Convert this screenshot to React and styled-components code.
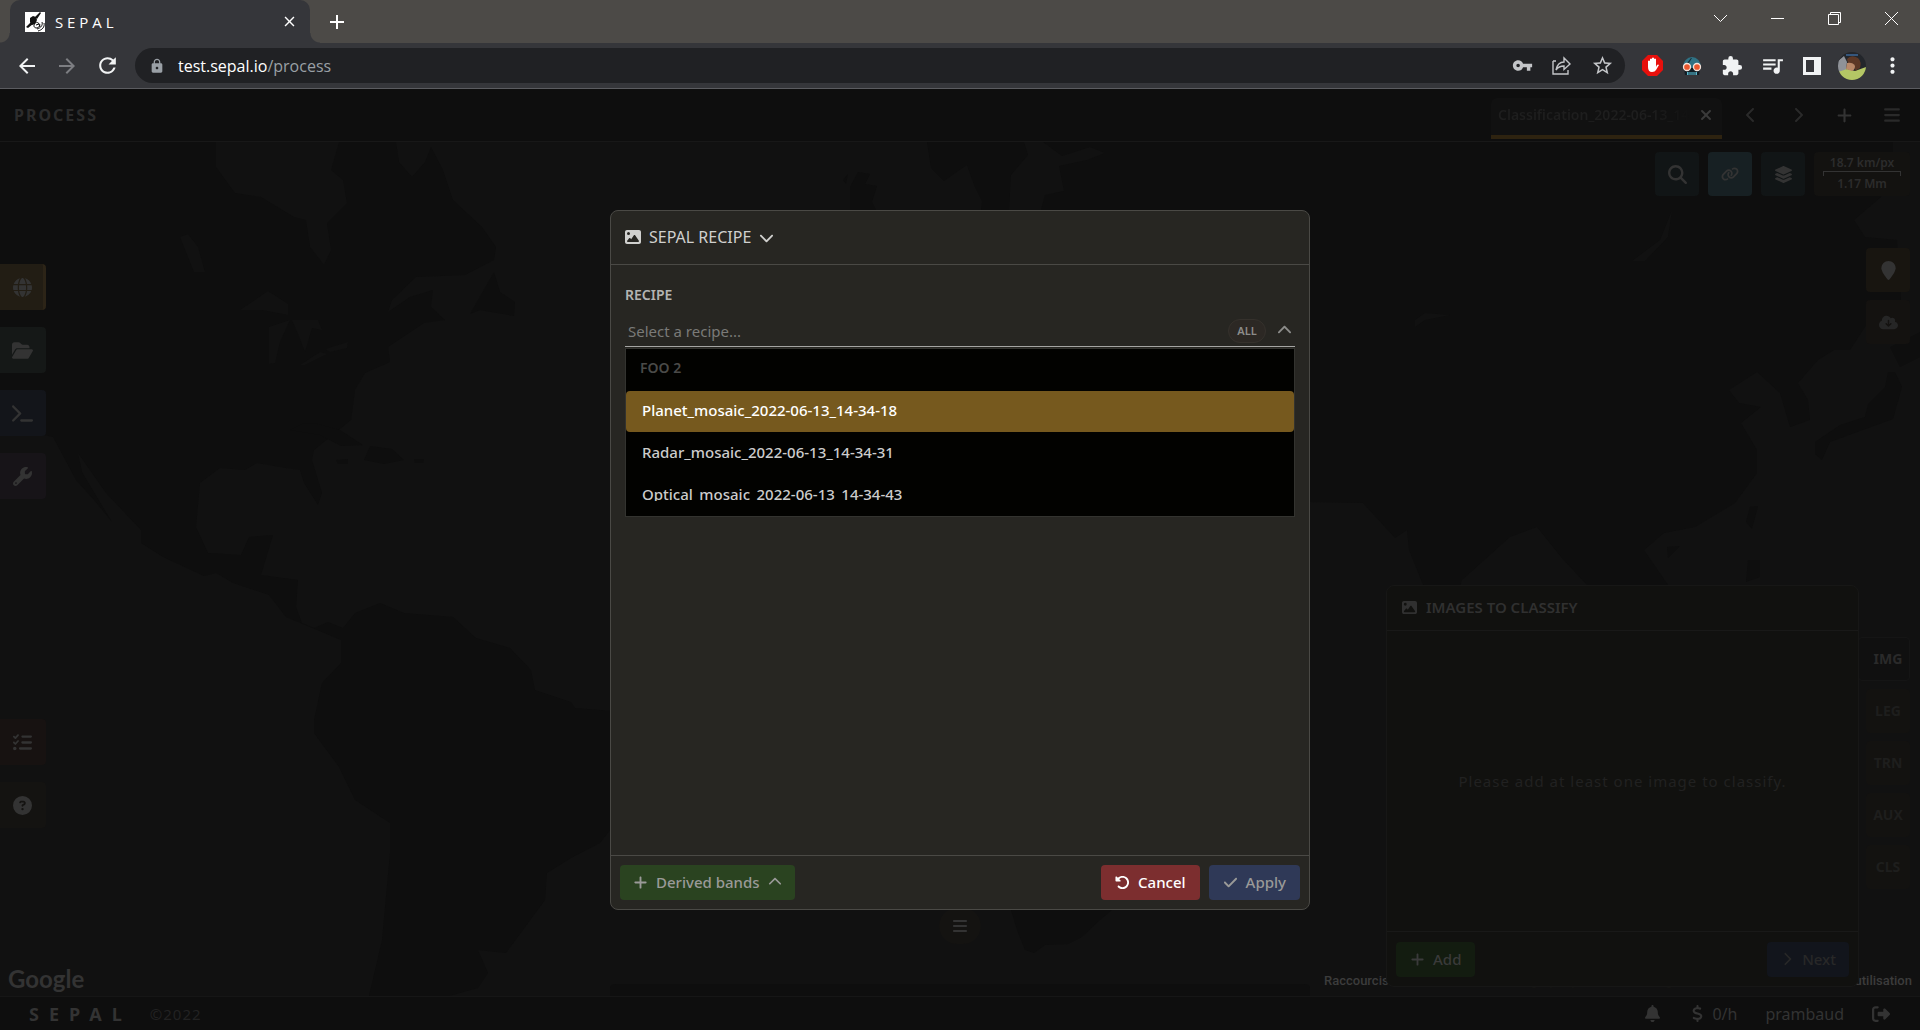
import React from "react";
import styled, { createGlobalStyle } from "styled-components";
import {
  MdArrowBack, MdArrowForward, MdRefresh, MdLock, MdVpnKey, MdStarBorder,
  MdExtension, MdQueueMusic, MdMoreVert, MdAdd, MdClose,
} from "react-icons/md";
import {
  FaGlobe, FaFolderOpen, FaTerminal, FaWrench, FaListCheck, FaCircleQuestion,
  FaImage, FaBars, FaPlus, FaXmark, FaMagnifyingGlass, FaLink, FaLayerGroup,
  FaLocationPin, FaCloudArrowDown, FaBell, FaDollarSign, FaRightFromBracket,
  FaRotateLeft, FaCheck, FaChevronDown, FaChevronUp, FaChevronLeft, FaChevronRight,
} from "react-icons/fa6";

const GlobalStyle = createGlobalStyle`
  * { box-sizing: border-box; }
  body { margin: 0; background: #111; }
  button { font: inherit; color: inherit; border: 0; padding: 0; background: none; cursor: pointer; }
  svg { display: block; flex: none; }
`;

const Window = styled.div`
  min-height: 100vh;
  display: flex;
  flex-direction: column;
  overflow: hidden;
  font-family: "Noto Sans", sans-serif;
  font-size: 15px;
  line-height: 20px;
`;

/* Browser frame */
const TabStrip = styled.div`
  height: 43px;
  display: flex;
  align-items: stretch;
  padding: 0 0 0 10px;
  background: #4c4a47;
`;
const BrowserTab = styled.div`
  position: relative;
  width: 300px;
  display: flex;
  align-items: center;
  gap: 10px;
  padding: 0 12px 0 15px;
  background: #35363a;
  border-radius: 10px 10px 0 0;
  color: #fff;
  &::before, &::after {
    content: "";
    position: absolute;
    bottom: 0;
    width: 10px;
    height: 10px;
  }
  &::before { left: -10px; background: radial-gradient(circle at 0 0, #4c4a47 9px, #35363a 10px); }
  &::after { right: -10px; background: radial-gradient(circle at 100% 0, #4c4a47 9px, #35363a 10px); }
`;
const TabTitle = styled.span`
  flex: 1;
  font-family: "Open Sans", sans-serif;
`;
const NewTab = styled.button`
  width: 28px;
  margin-left: 13px;
  display: grid;
  place-items: center;
  color: #fff;
`;
const WindowControls = styled.div`
  margin-left: auto;
  display: flex;
  height: 37px;
`;
const WindowButton = styled.button`
  width: 57px;
  display: grid;
  place-items: center;
`;
const Toolbar = styled.div`
  height: 46px;
  display: flex;
  align-items: center;
  background: #35363a;
  border-bottom: 1px solid #5b5c60;
  padding: 0 8px 0 7px;
`;
const ToolButton = styled.button`
  width: 40px;
  height: 34px;
  display: grid;
  place-items: center;
  color: ${(p) => p.$color || "#f1f3f4"};
`;
const AddressBar = styled.div`
  flex: 1;
  height: 35px;
  margin: 0 7px 0 8px;
  padding: 0 3px 0 14px;
  border-radius: 18px;
  background: #202124;
  display: flex;
  align-items: center;
  color: #9aa0a6;
`;
const Address = styled.div`
  flex: 1;
  margin-left: 13px;
  font-family: "Open Sans", sans-serif;
  font-size: 16px;
  b { font-weight: 400; color: #fff; }
`;

/* Application frame */
const Workspace = styled.main`
  position: relative;
  flex: 1;
  display: flex;
  flex-direction: column;
  background: #0e0e0e;
  color: #333;
`;
const AppHeader = styled.header`
  height: 53px;
  display: flex;
  align-items: center;
  border-bottom: 1px solid #181818;
  padding: 0 5px 0 14px;
`;
const Title = styled.h1`
  flex: 1;
  margin: 0;
  font-size: 16px;
  letter-spacing: 2px;
  color: #2c2c2c;
`;
const RecipeTab = styled.div`
  align-self: flex-end;
  width: 231px;
  height: 41px;
  margin: 0 5px 2px 0;
  padding: 0 8px 3px 7px;
  display: flex;
  align-items: center;
  gap: 8px;
  background: #111;
  border-bottom: 4px solid #2e2310;
  border-radius: 6px 6px 0 0;
  color: #1e1e1e;
`;
const RecipeTabName = styled.span`
  flex: 1;
  overflow: hidden;
  white-space: nowrap;
  font-size: 14px;
  font-weight: 600;
  mask-image: linear-gradient(90deg, #000 80%, transparent);
`;
const CloseRecipe = styled.button`
  color: #3a3a3a;
`;
const HeaderButton = styled.button`
  width: 47px;
  height: 40px;
  display: grid;
  place-items: center;
  color: ${(p) => p.$color || "#2a2a2a"};
`;
const MapArea = styled.section`
  position: relative;
  flex: 1;
  overflow: hidden;
  background: #111;
`;
const WorldMap = styled.svg`
  position: absolute;
  inset: 0;
  width: 100%;
  height: 100%;
`;
const SideMenu = styled.nav`
  position: absolute;
  left: 0;
  ${(p) => (p.$bottom ? "bottom: 168px;" : "top: 122px;")}
  display: flex;
  flex-direction: column;
  gap: 17px;
`;
const SideButton = styled.button`
  width: 46px;
  height: 46px;
  padding-right: 2px;
  display: grid;
  place-items: center;
  border-radius: 0 4px 4px 0;
  background: ${(p) => p.$bg};
  color: #333;
  ${(p) => p.$active && "border-right: 3px solid #2c2417; padding: 0 0 0 1px;"}
`;
const MapTools = styled.div`
  position: absolute;
  top: 10px;
  right: 10px;
  display: flex;
  gap: 9px;
`;
const MapActions = styled.div`
  position: absolute;
  top: 106px;
  right: 10px;
  display: flex;
  flex-direction: column;
  gap: 8px;
`;
const SquareButton = styled.button`
  width: 44px;
  height: 44px;
  display: grid;
  place-items: center;
  border-radius: 4px;
  background: ${(p) => p.$bg};
  color: ${(p) => p.$color || "#333"};
`;
const Scale = styled.div`
  width: 96px;
  height: 44px;
  padding: 0 9px 2px;
  display: flex;
  flex-direction: column;
  justify-content: center;
  border-radius: 4px;
  background: #131210;
  text-align: center;
  font-size: 12px;
  line-height: 16px;
  font-weight: 600;
  color: #2c2c2c;
`;
const ScaleBar = styled.i`
  height: 5px;
  border: 1px solid #333;
  border-bottom: 0;
`;
const MapLogo = styled.a`
  position: absolute;
  left: 8px;
  bottom: 3px;
  font: 700 24px/28px Lato, sans-serif;
  color: #333;
  text-decoration: none;
`;
const Attribution = styled.div`
  position: absolute;
  right: 8px;
  bottom: 6px;
  width: 588px;
  display: flex;
  justify-content: space-between;
  font: 500 13px/18px Roboto, sans-serif;
  color: #3c3c3c;
  span { color: #151513; }
`;
const Handle = styled.button`
  position: absolute;
  left: 50%;
  bottom: 52px;
  width: 42px;
  height: 36px;
  margin-left: -21px;
  display: grid;
  place-items: center;
  border-radius: 18px;
  background: #141311;
  color: #333;
`;
const Panel = styled.section`
  position: absolute;
  right: 61px;
  bottom: 9px;
  width: 473px;
  height: 402px;
  display: flex;
  flex-direction: column;
  border: 1px solid #171716;
  border-radius: 8px;
  background: #11110f;
`;
const PanelHeader = styled.h2`
  height: 45px;
  margin: 0;
  padding: 0 15px 2px;
  display: flex;
  align-items: center;
  gap: 9px;
  border-bottom: 1px solid #191918;
  font-size: 15px;
  font-weight: 600;
  color: #303030;
`;
const PanelBody = styled.p`
  flex: 1;
  margin: 0;
  display: grid;
  place-items: center;
  letter-spacing: 1px;
  color: #212121;
`;
const PanelFooter = styled.div`
  height: 55px;
  padding: 0 9px;
  display: flex;
  align-items: center;
  justify-content: space-between;
  border-top: 1px solid #191918;
`;
const PanelTabs = styled.nav`
  position: absolute;
  right: 10px;
  bottom: 107px;
  display: flex;
  flex-direction: column;
  align-items: flex-end;
  gap: 8px;
`;
const PanelTab = styled.button`
  width: ${(p) => (p.$active ? 52 : 44)}px;
  height: 44px;
  padding-left: ${(p) => (p.$active ? 8 : 0)}px;
  border-radius: 4px;
  background: ${(p) => (p.$active ? "#101010" : "#131210")};
  border: 1px solid ${(p) => (p.$active ? "#151515" : "#131210")};
  font-size: 14px;
  font-weight: 700;
  color: ${(p) => (p.$active ? "#2a2a2a" : "#1e1e1d")};
`;
const StatusBar = styled.footer`
  height: 34px;
  padding: 0 30px 0 29px;
  display: flex;
  align-items: center;
  gap: 28px;
  border-top: 1px solid #161616;
  font-size: 16px;
  color: #333;
`;
const Brand = styled.strong`
  font-size: 18px;
  letter-spacing: 10px;
`;
const Copyright = styled.span`
  flex: 1;
  margin-left: -10px;
  font-size: 15px;
  letter-spacing: 1px;
  color: #222;
`;
const Budget = styled.span`
  display: flex;
  align-items: center;
  gap: 6px;
`;

/* Dialog */
const Overlay = styled.div`
  position: absolute;
  inset: 0;
  display: flex;
  align-items: center;
  justify-content: center;
`;
const Dialog = styled.section`
  width: 700px;
  height: 700px;
  display: flex;
  flex-direction: column;
  border: 1px solid #4a4945;
  border-radius: 8px;
  background: #272622;
  color: #ccc;
`;
const DialogHeader = styled.header`
  height: 54px;
  padding: 0 14px;
  display: flex;
  align-items: center;
  border-bottom: 1px solid #4a4945;
`;
const TypeButton = styled.button`
  display: flex;
  align-items: center;
  gap: 8px;
  font-size: 16px;
  color: #d0d0ce;
`;
const DialogBody = styled.div`
  flex: 1;
  padding: 20px 14px;
`;
const FieldLabel = styled.label`
  display: block;
  font-size: 14px;
  font-weight: 600;
  color: #b4b4b2;
`;
const Combo = styled.div`
  height: 41px;
  margin-top: 1px;
  padding: 10px 3px 0 0;
  display: flex;
  align-items: center;
  gap: 11px;
  border-bottom: 1px solid #a5a5a3;
  color: #8c8c8a;
`;
const ComboInput = styled.input`
  flex: 1;
  padding: 4px 3px;
  border: 0;
  outline: 0;
  background: none;
  font: 15px/20px "Noto Sans", sans-serif;
  color: #ccc;
  &::placeholder { color: #7a7a78; opacity: 1; }
`;
const Pill = styled.button`
  width: 38px;
  height: 24px;
  border-radius: 12px;
  border: 1px solid #35312c;
  background: #2c2824;
  font-size: 11px;
  font-weight: 600;
  color: #8c8c8a;
`;
const Options = styled.ul`
  margin: 1px 0 0;
  padding: 0;
  list-style: none;
  border: 1px solid #33332f;
  background: #020200;
`;
const OptionGroup = styled.li`
  height: 42px;
  padding: 0 14px 3px;
  display: flex;
  align-items: center;
  font-size: 14px;
  font-weight: 600;
  color: #4a4a48;
`;
const Option = styled.li`
  height: 41px;
  padding: 0 16px 2px;
  display: flex;
  align-items: center;
  border-radius: 4px;
  background: ${(p) => (p.$selected ? "#76591e" : "transparent")};
  color: ${(p) => (p.$selected ? "#fff" : "#ccc")};
  font-weight: 500;
  & + & { margin-top: 1px; }
`;
const OptionLabel = styled.span`
  line-height: ${(p) => (p.$clipped ? 14 : 20)}px;
  overflow: ${(p) => (p.$clipped ? "hidden" : "visible")};
`;
const DialogFooter = styled.footer`
  height: 54px;
  padding: 0 9px;
  display: flex;
  align-items: center;
  gap: 9px;
  border-top: 1px solid #4a4945;
`;
const Spacer = styled.span`
  flex: 1;
`;
const ActionButton = styled.button`
  height: 35px;
  padding: 0 ${(p) => (p.$menu ? 13 : 14)}px;
  display: flex;
  align-items: center;
  gap: 8px;
  border-radius: 4px;
  background: ${(p) => p.$bg};
  color: ${(p) => p.$color};
  font-weight: 500;
`;

const Satellite = () => (
  <svg width="20" height="20" viewBox="0 0 20 20">
    <rect width="20" height="20" fill="#fff" />
    <path d="M1 15l5-5 2 2-5 4zM10 5l5-5 1 1-4 6z" fill="#111" />
    <path d="M5 6l3-2 3 1 1 3-2 4-3 1-2-3z" fill="#111" />
    <path d="M10 11c-2 3-1 5 2 5 3-1 4-4 1-5-1-1-2-1-3 0zM17 10c1 3-1 6-5 7M19 11c1 4-2 7-6 8" fill="none" stroke="#111" strokeWidth="1" />
    <path d="M11 13l3-1 1 3" fill="none" stroke="#111" strokeWidth="1" />
  </svg>
);
const Share = () => (
  <svg width="20" height="20" viewBox="0 0 20 20" fill="none" stroke="currentColor" strokeWidth="1.4">
    <path d="M1 5v13h15v-4M1 5h3" />
    <path d="M12 6V2l6 6-6 5.500V10c-3 0-6 1-8 4 1-5 4-8 8-8z" />
  </svg>
);
const Blocker = () => (
  <svg width="21" height="21" viewBox="0 0 21 21">
    <path d="M6 0h9l6 6v9l-6 6H6l-6-6V6z" fill="#e8100c" />
    <path d="M6 11V6q1-1 2 0v3-5q1-1 2 0v4-5q1-1 2 0v5-4q1-1 2 0v8l1-2q1-1 2 0l-3 5q-1 2-4 2-4 0-4-5z" fill="#fff" />
  </svg>
);
const Robot = () => (
  <svg width="20" height="20" viewBox="0 0 20 20">
    <path d="M1 11a9 10 0 0 1 18 0v2H1z" fill="#2f7284" />
    <path d="M9 2l-4 5h2l3-5z" fill="#16323c" />
    <path d="M2 12h16l-1 7H3z" fill="#111d24" />
    <path d="M5 16h10v3H5z" fill="#59b4c9" />
    <path d="M7 16v3M9 16v3M11 16v3M13 16v3" stroke="#16323c" />
    <circle cx="5" cy="11" r="3.500" fill="#e9582f" stroke="#f5e3da" strokeWidth="1.300" />
    <circle cx="15" cy="11" r="3.500" fill="#e9582f" stroke="#f5e3da" strokeWidth="1.300" />
  </svg>
);
const SidePanel = () => (
  <svg width="18" height="18" viewBox="0 0 18 18">
    <path fillRule="evenodd" d="M0 0h18v18H0zM3 3v12h8V3z" fill="#f1f3f4" />
  </svg>
);
const Avatar = () => (
  <svg width="28" height="28" viewBox="0 0 28 28">
    <clipPath id="face"><circle cx="14" cy="14" r="14" /></clipPath>
    <g clipPath="url(#face)">
      <path d="M0 0h28v28H0z" fill="#23262b" />
      <path d="M0 9l6-5 3 6-1 8-8 3z" fill="#8f9298" />
      <path d="M0 20l9-3 8 2 11-4v13H0z" fill="#b4c765" />
      <path d="M9 7q4-5 11-1 4 4 2 10l-5 3q1-5-7-8z" fill="#5d3826" />
      <path d="M9 11q6-1 8 3 0 4-3 5l-6-2z" fill="#b98868" />
      <path d="M8 3h12" stroke="#35567c" strokeWidth="2" />
    </g>
  </svg>
);
const Line = ({ d }) => (
  <svg width="15" height="15" viewBox="0 0 15 15" fill="none" stroke="#fff" strokeWidth="1"><path d={d} /></svg>
);

const land = [
  "M0 0H216V25L235 51 261 55 294 75 306 78 310 105 324 123 331 108 327 81 347 61 343 38 331 28 339 0H396L399 20 412 35 425 20 431 5 443 28 453 58 482 85 496 105 494 118 465 133 416 135 392 158 388 170 410 155 433 148 431 165 445 178 424 181 388 205 390 220 365 231 355 248 351 278 314 308 312 318 322 351 318 363 304 341 300 328 286 326 257 321 245 328 220 326 200 341 196 385 208 411 241 413 249 395 273 393 261 433 298 438 296 465 302 481 314 486 328 480 343 486 355 471 380 461 404 471 453 475 476 496 510 506 531 528 535 548 571 560 575 566 612 569 655 590 640 650 600 701 571 716 547 731 545 758 506 811 478 808 488 831 478 846 449 854H369L382 798 390 711 390 681 355 658 339 625 314 591 314 578 322 541 341 521 341 498 286 475 269 453 233 441 216 431 204 434 163 415 141 401 141 388 106 351 78 311 82 330 112 380 94 358 76 338 53 295 0 283Z",
  "M290 288L302 282 314 281 340 288 363 303 341 304 320 293ZM370 304L392 307 404 318 384 322 364 318ZM336 318L348 317 348 322 338 322ZM414 317L424 317 423 321 415 321ZM470 172L494 130 500 150 515 160 514 174 480 168Z",
  "M927 0H1024L1028 13 1011 33 1009 68H981L982 59 974 43 967 23 958 29 944 39 931 26ZM850 45L858 30 870 32 865 42 877 44 872 60 876 68H850ZM843 38L848 32 846 42Z",
  "M1043 0H1893V18L1881 55 1854 78 1865 95 1897 98 1901 158 1865 185 1850 208 1834 208 1818 218 1798 241 1808 258 1810 278 1790 285 1780 251 1757 230 1729 248 1739 261 1761 265 1741 281 1757 308 1757 331 1735 361 1695 385 1664 391 1644 408 1668 443 1680 470 1587 443 1561 415 1537 385 1510 395 1462 438 1450 480 1430 460 1409 408 1407 388 1395 396 1363 361 1310 360 1041 360V68L1045 53 1064 49 1059 24 1087 18 1105 11 1090 5 1062 14Z",
  "M1815 300L1840 283 1865 275 1868 262 1885 245 1888 230 1895 230 1902 245 1893 277 1860 289 1830 300 1822 318 1815 312ZM1890 205L1920 190V215L1900 225ZM1750 365L1758 364 1752 387 1746 380ZM1748 418L1760 418 1760 435 1746 440ZM1667 405L1680 404 1668 416Z",
  "M1011 768L1017 788 1025 808 1034 811 1045 803 1068 802 1082 795 1100 778 1112 768ZM610 854V846Q610 842 616 842H1304Q1310 842 1310 846V854Z",
];
const lakes = "M240 168L268 149 288 162 288 173 262 168ZM269 222L269 185 290 178 280 200 275 221ZM292 178L318 178 322 188 312 186 305 210 298 192ZM300 223L320 210 327 212 305 223ZM325 207L348 200 347 206 330 210ZM180 95L188 92 198 105 205 130 194 130ZM1672 68L1668 95 1645 119 1632 119 1660 98ZM1415 185L1415 178 1425 171 1450 173 1425 178Z";

const tabs = ["IMG", "LEG", "TRN", "AUX", "CLS"];

export default function App() {
  return (
    <Window>
      <GlobalStyle />
      <TabStrip>
        <BrowserTab>
          <Satellite />
          <TabTitle>S E P A L</TabTitle>
          <button aria-label="Close tab"><MdClose size={17} /></button>
        </BrowserTab>
        <NewTab aria-label="New tab"><MdAdd size={24} /></NewTab>
        <WindowControls>
          <WindowButton aria-label="Search tabs"><Line d="M1 4l6.500 6.500L14 4" /></WindowButton>
          <WindowButton aria-label="Minimize"><Line d="M1 7.500h13" /></WindowButton>
          <WindowButton aria-label="Restore"><Line d="M1.500 3.500h10v10h-10zM3.500 3.500v-2h10v10h-2" /></WindowButton>
          <WindowButton aria-label="Close window"><Line d="M1 1l13 13M14 1L1 14" /></WindowButton>
        </WindowControls>
      </TabStrip>
      <Toolbar>
        <ToolButton aria-label="Back"><MdArrowBack size={24} /></ToolButton>
        <ToolButton aria-label="Forward" $color="#7d7e82"><MdArrowForward size={24} /></ToolButton>
        <ToolButton aria-label="Reload"><MdRefresh size={25} /></ToolButton>
        <AddressBar>
          <MdLock size={16} />
          <Address role="textbox" aria-label="Address"><b>test.sepal.io</b>/process</Address>
          <ToolButton aria-label="Passwords" $color="#c3c5c8"><MdVpnKey size={21} /></ToolButton>
          <ToolButton aria-label="Share" $color="#c3c5c8"><Share /></ToolButton>
          <ToolButton aria-label="Bookmark" $color="#c3c5c8"><MdStarBorder size={23} /></ToolButton>
        </AddressBar>
        <ToolButton aria-label="Ad blocker"><Blocker /></ToolButton>
        <ToolButton aria-label="Robot extension"><Robot /></ToolButton>
        <ToolButton aria-label="Extensions"><MdExtension size={22} /></ToolButton>
        <ToolButton aria-label="Media"><MdQueueMusic size={25} /></ToolButton>
        <ToolButton aria-label="Side panel"><SidePanel /></ToolButton>
        <ToolButton aria-label="Profile"><Avatar /></ToolButton>
        <ToolButton aria-label="Menu"><MdMoreVert size={25} /></ToolButton>
      </Toolbar>

      <Workspace>
        <AppHeader>
          <Title>PROCESS</Title>
          <RecipeTab>
            <RecipeTabName>Classification_2022-06-13_14</RecipeTabName>
            <CloseRecipe aria-label="Close recipe"><FaXmark size={16} /></CloseRecipe>
          </RecipeTab>
          <HeaderButton aria-label="Previous"><FaChevronLeft size={16} /></HeaderButton>
          <HeaderButton aria-label="Next tab"><FaChevronRight size={16} /></HeaderButton>
          <HeaderButton aria-label="Add recipe" $color="#333"><FaPlus size={17} /></HeaderButton>
          <HeaderButton aria-label="Recipes"><FaBars size={18} /></HeaderButton>
        </AppHeader>

        <MapArea>
          <WorldMap viewBox="0 0 1920 854" preserveAspectRatio="xMidYMid slice" aria-hidden="true">
            {land.map((d) => <path key={d} d={d} fill="#0e0e0e" />)}
            <path d={lakes} fill="#111" />
          </WorldMap>
          <MapLogo href="#map">Google</MapLogo>
          <Attribution>
            Raccourcis <span>Données cartographiques ©2022 Google, INEGI</span> Conditions d'utilisation
          </Attribution>
          <SideMenu>
            <SideButton aria-label="Process" $bg="#221d14" $active><FaGlobe size={19} /></SideButton>
            <SideButton aria-label="Files" $bg="#151817"><FaFolderOpen size={21} /></SideButton>
            <SideButton aria-label="Terminal" $bg="#13151a"><FaTerminal size={21} /></SideButton>
            <SideButton aria-label="Apps" $bg="#171418"><FaWrench size={19} /></SideButton>
          </SideMenu>
          <SideMenu $bottom>
            <SideButton aria-label="Tasks" $bg="#171211"><FaListCheck size={19} /></SideButton>
            <SideButton aria-label="Help" $bg="#141311"><FaCircleQuestion size={19} /></SideButton>
          </SideMenu>
          <MapTools>
            <SquareButton aria-label="Search" $bg="#111516"><FaMagnifyingGlass size={19} /></SquareButton>
            <SquareButton aria-label="Link" $bg="#172023"><FaLink size={18} /></SquareButton>
            <SquareButton aria-label="Layers" $bg="#111516"><FaLayerGroup size={19} /></SquareButton>
            <Scale><span>18.7 km/px</span><ScaleBar /><span>1.17 Mm</span></Scale>
          </MapTools>
          <MapActions>
            <SquareButton aria-label="Initialize" $bg="#181510"><FaLocationPin size={19} /></SquareButton>
            <SquareButton aria-label="Retrieve" $bg="#141210" $color="#262626"><FaCloudArrowDown size={19} /></SquareButton>
          </MapActions>
          <PanelTabs>
            {tabs.map((name, i) => (
              <PanelTab key={name} $active={i === 0}>{name}</PanelTab>
            ))}
          </PanelTabs>
          <Panel>
            <PanelHeader><FaImage size={15} />IMAGES TO CLASSIFY</PanelHeader>
            <PanelBody>Please add at least one image to classify.</PanelBody>
            <PanelFooter>
              <ActionButton $bg="#131c10" $color="#3a3a3a"><FaPlus size={15} />Add</ActionButton>
              <ActionButton $menu $bg="#12151c" $color="#282828"><FaChevronRight size={14} />Next</ActionButton>
            </PanelFooter>
          </Panel>
          <Handle aria-label="Expand"><FaBars size={16} /></Handle>
        </MapArea>

        <StatusBar>
          <Brand>SEPAL</Brand>
          <Copyright>©2022</Copyright>
          <FaBell size={17} />
          <Budget><FaDollarSign size={17} />0/h</Budget>
          <span>prambaud</span>
          <FaRightFromBracket size={18} />
        </StatusBar>

        <Overlay>
          <Dialog role="dialog" aria-label="Sepal recipe">
            <DialogHeader>
              <TypeButton><FaImage size={16} />SEPAL RECIPE<FaChevronDown size={15} /></TypeButton>
            </DialogHeader>
            <DialogBody>
              <FieldLabel htmlFor="recipe">RECIPE</FieldLabel>
              <Combo>
                <ComboInput id="recipe" type="text" placeholder="Select a recipe..." />
                <Pill>ALL</Pill>
                <FaChevronUp size={15} />
              </Combo>
              <Options role="listbox" aria-label="Recipes">
                <OptionGroup role="presentation">FOO 2</OptionGroup>
                <Option role="option" aria-selected="true" $selected><OptionLabel>Planet_mosaic_2022-06-13_14-34-18</OptionLabel></Option>
                <Option role="option" aria-selected="false"><OptionLabel>Radar_mosaic_2022-06-13_14-34-31</OptionLabel></Option>
                <Option role="option" aria-selected="false"><OptionLabel $clipped>Optical_mosaic_2022-06-13_14-34-43</OptionLabel></Option>
              </Options>
            </DialogBody>
            <DialogFooter>
              <ActionButton $menu $bg="#2a4320" $color="#9a9a98"><FaPlus size={15} />Derived bands<FaChevronUp size={14} /></ActionButton>
              <Spacer />
              <ActionButton $bg="#7c2e2f" $color="#fff"><FaRotateLeft size={15} />Cancel</ActionButton>
              <ActionButton $bg="#2f3957" $color="#9a9a98"><FaCheck size={15} />Apply</ActionButton>
            </DialogFooter>
          </Dialog>
        </Overlay>
      </Workspace>
    </Window>
  );
}
